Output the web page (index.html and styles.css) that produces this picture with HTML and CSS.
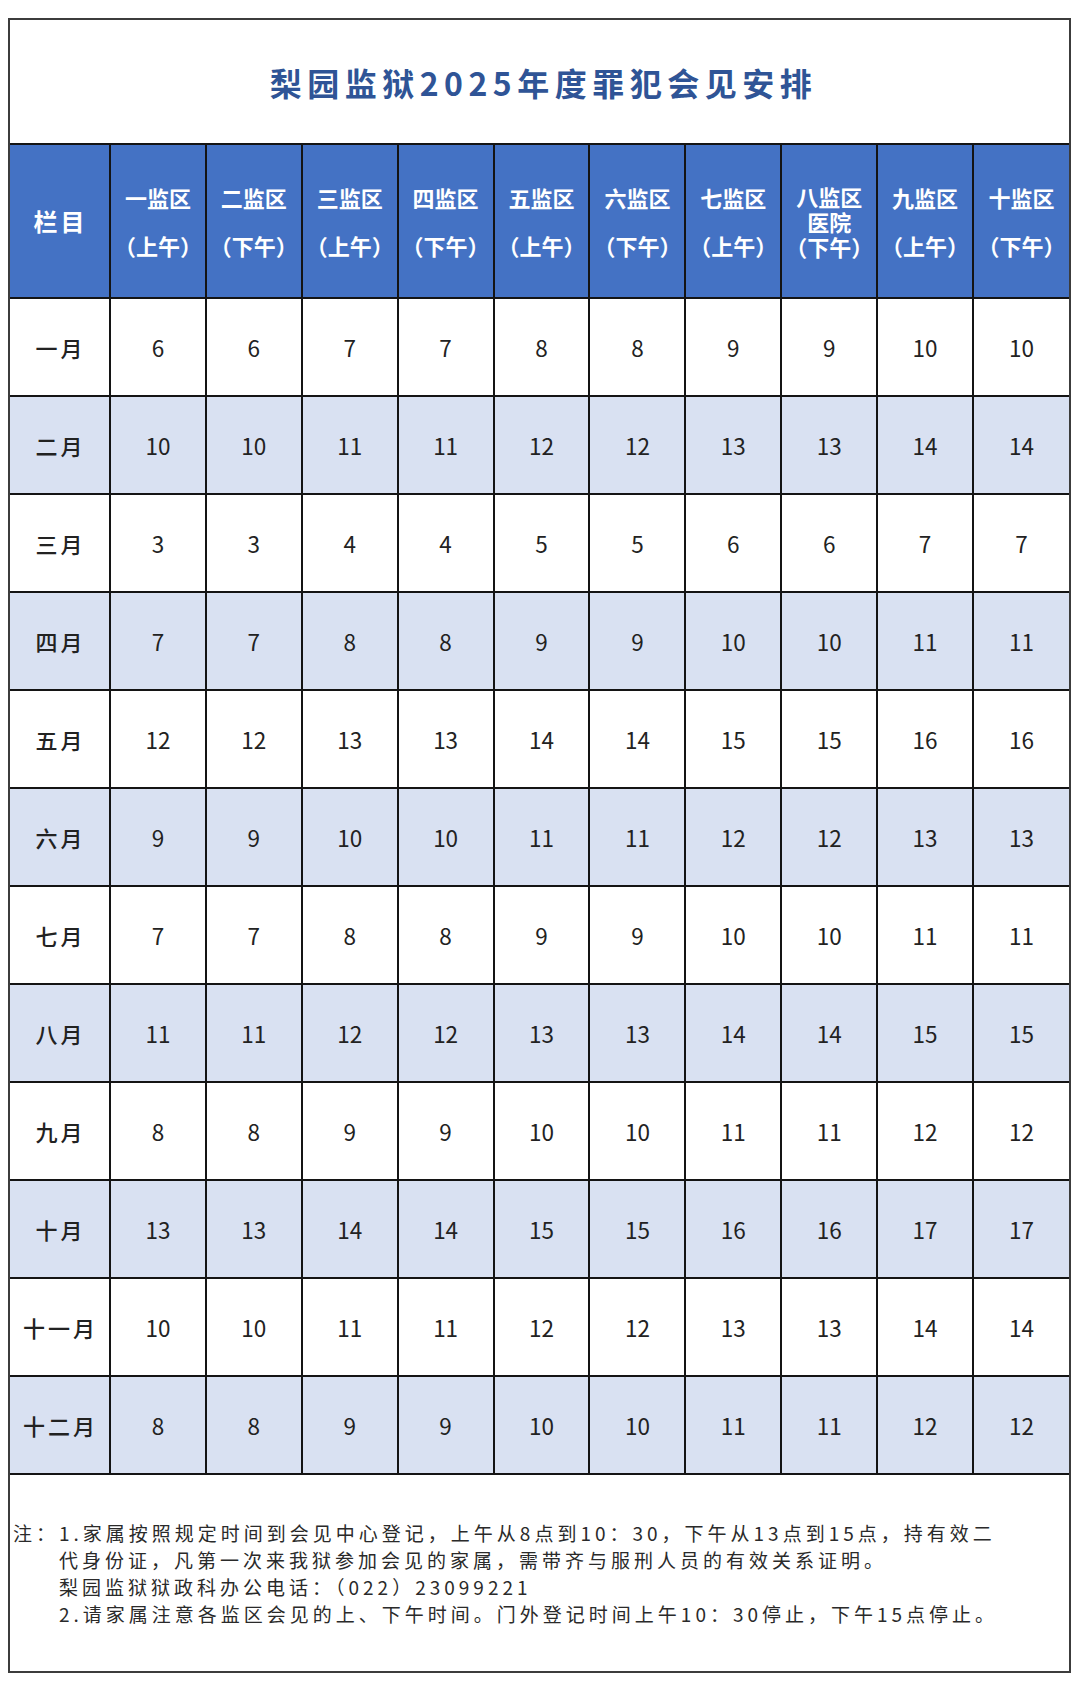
FILE: index.html
```html
<!DOCTYPE html>
<html lang="zh-CN">
<head>
<meta charset="utf-8">
<title>梨园监狱2025年度罪犯会见安排</title>
<link rel="stylesheet" href="styles.css">
</head>
<body>
<div class="sheet">
  <div class="title">梨园监狱2025年度罪犯会见安排</div>
  <table class="grid">
    <colgroup>
      <col class="c-first">
      <col><col><col><col><col><col><col><col><col><col>
    </colgroup>
    <thead>
      <tr>
        <th class="th-label">栏目</th>
        <th><div class="hd"><span>一监区</span><span class="hd-time">（上午）</span></div></th>
        <th><div class="hd"><span>二监区</span><span class="hd-time">（下午）</span></div></th>
        <th><div class="hd"><span>三监区</span><span class="hd-time">（上午）</span></div></th>
        <th><div class="hd"><span>四监区</span><span class="hd-time">（下午）</span></div></th>
        <th><div class="hd"><span>五监区</span><span class="hd-time">（上午）</span></div></th>
        <th><div class="hd"><span>六监区</span><span class="hd-time">（下午）</span></div></th>
        <th><div class="hd"><span>七监区</span><span class="hd-time">（上午）</span></div></th>
        <th><div class="hd hd-three"><span>八监区</span><span class="hd-sub">医院</span><span class="hd-time">（下午）</span></div></th>
        <th><div class="hd"><span>九监区</span><span class="hd-time">（上午）</span></div></th>
        <th><div class="hd"><span>十监区</span><span class="hd-time">（下午）</span></div></th>
      </tr>
    </thead>
    <tbody>
      <tr><td class="m">一月</td><td>6</td><td>6</td><td>7</td><td>7</td><td>8</td><td>8</td><td>9</td><td>9</td><td>10</td><td>10</td></tr>
      <tr class="alt"><td class="m">二月</td><td>10</td><td>10</td><td>11</td><td>11</td><td>12</td><td>12</td><td>13</td><td>13</td><td>14</td><td>14</td></tr>
      <tr><td class="m">三月</td><td>3</td><td>3</td><td>4</td><td>4</td><td>5</td><td>5</td><td>6</td><td>6</td><td>7</td><td>7</td></tr>
      <tr class="alt"><td class="m">四月</td><td>7</td><td>7</td><td>8</td><td>8</td><td>9</td><td>9</td><td>10</td><td>10</td><td>11</td><td>11</td></tr>
      <tr><td class="m">五月</td><td>12</td><td>12</td><td>13</td><td>13</td><td>14</td><td>14</td><td>15</td><td>15</td><td>16</td><td>16</td></tr>
      <tr class="alt"><td class="m">六月</td><td>9</td><td>9</td><td>10</td><td>10</td><td>11</td><td>11</td><td>12</td><td>12</td><td>13</td><td>13</td></tr>
      <tr><td class="m">七月</td><td>7</td><td>7</td><td>8</td><td>8</td><td>9</td><td>9</td><td>10</td><td>10</td><td>11</td><td>11</td></tr>
      <tr class="alt"><td class="m">八月</td><td>11</td><td>11</td><td>12</td><td>12</td><td>13</td><td>13</td><td>14</td><td>14</td><td>15</td><td>15</td></tr>
      <tr><td class="m">九月</td><td>8</td><td>8</td><td>9</td><td>9</td><td>10</td><td>10</td><td>11</td><td>11</td><td>12</td><td>12</td></tr>
      <tr class="alt"><td class="m">十月</td><td>13</td><td>13</td><td>14</td><td>14</td><td>15</td><td>15</td><td>16</td><td>16</td><td>17</td><td>17</td></tr>
      <tr><td class="m">十一月</td><td>10</td><td>10</td><td>11</td><td>11</td><td>12</td><td>12</td><td>13</td><td>13</td><td>14</td><td>14</td></tr>
      <tr class="alt"><td class="m">十二月</td><td>8</td><td>8</td><td>9</td><td>9</td><td>10</td><td>10</td><td>11</td><td>11</td><td>12</td><td>12</td></tr>
    </tbody>
  </table>
  <div class="note">
    <div class="note-inner">
      <div class="note-label">注：</div>
      <div class="note-body">
        <div class="note-line">1.家属按照规定时间到会见中心登记，上午从8点到10：30，下午从13点到15点，持有效二</div>
        <div class="note-line">代身份证，凡第一次来我狱参加会见的家属，需带齐与服刑人员的有效关系证明。</div>
        <div class="note-line">梨园监狱狱政科办公电话：（022）23099221</div>
        <div class="note-line">2.请家属注意各监区会见的上、下午时间。门外登记时间上午10：30停止，下午15点停止。</div>
      </div>
    </div>
  </div>
</div>
</body>
</html>
```
FILE: styles.css
```css
html, body {
  margin: 0;
  padding: 0;
  background: #ffffff;
}

body {
  font-family: "Noto Sans CJK SC", "Noto Sans", sans-serif;
  color: #1a1a1a;
}

.sheet {
  box-sizing: border-box;
  width: 1063px;
  margin: 18px 0 0 8px;
  border: 2px solid #3c3c3c;
  background: #fff;
}

.title {
  height: 123px;
  display: flex;
  align-items: center;
  justify-content: center;
  padding-left: 8px;
  font-size: 32px;
  font-weight: 700;
  letter-spacing: 5.5px;
  color: #2f5496;
  line-height: 1;
}

.grid {
  width: 100%;
  border-collapse: collapse;
  table-layout: fixed;
}

.c-first {
  width: 100px;
}

.grid th,
.grid td {
  border: 2px solid #141414;
  text-align: center;
  vertical-align: middle;
  padding: 0;
}

.grid tr > :first-child {
  border-left: none;
}

.grid tr > :last-child {
  border-right: none;
}

.grid th {
  height: 152px;
  background: #4472c4;
  color: #ffffff;
  font-weight: 700;
  font-size: 22px;
  line-height: 24px;
}

.grid th.th-label {
  font-size: 24px;
  letter-spacing: 3px;
  padding-left: 2px;
}

.hd {
  display: flex;
  flex-direction: column;
  align-items: center;
  white-space: nowrap;
}

.hd-time {
  margin-top: 24px;
}

.hd-three span {
  line-height: 25px;
}

.hd-three .hd-time {
  margin-top: 0;
}

.grid td {
  height: 96px;
  font-size: 22.5px;
  color: #222222;
  background: #ffffff;
}

.grid tr.alt td {
  background: #d9e1f2;
}

.grid td.m {
  font-size: 22px;
  font-weight: 500;
  letter-spacing: 3px;
  padding-left: 2px;
}

.note {
  height: 196px;
  display: flex;
  align-items: center;
  padding-left: 3px;
  font-size: 19px;
  line-height: 27px;
  letter-spacing: 4px;
  color: #2a2a2a;
  white-space: nowrap;
}

.note-inner {
  display: flex;
  align-items: flex-start;
}

.note-body {
  display: flex;
  flex-direction: column;
}
```
